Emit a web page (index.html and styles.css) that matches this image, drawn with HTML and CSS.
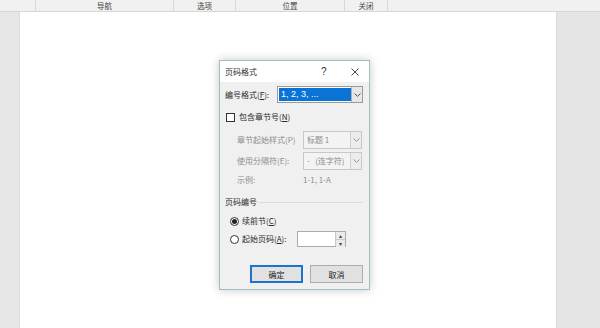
FILE: index.html
```html
<!DOCTYPE html>
<html lang="zh-CN">
<head>
  <meta charset="UTF-8" />
  <meta name="viewport" content="width=device-width, initial-scale=1.0" />
  <title>页码格式</title>
  <link rel="stylesheet" href="styles.css">
</head>
<body>
  <div class="topbar">
    <div class="tab tab-blank1"></div>
    <div class="tab tab-nav">导航</div>
    <div class="tab tab-opt">选项</div>
    <div class="tab tab-pos">位置</div>
    <div class="tab tab-close">关闭</div>
    <div class="tab tab-rest"></div>
  </div>

  <div class="workspace">
    <div class="gutter-left"></div>
    <div class="page">
      <div class="dialog">
        <div class="titlebar">
          <span class="title">页码格式</span>
          <span class="help">?</span>
          <span class="close"><svg width="8" height="8" viewBox="0 0 8 8"><path d="M0.5 0.5 L7.5 7.5 M7.5 0.5 L0.5 7.5" stroke="#333" stroke-width="0.9"/></svg></span>
        </div>

        <div class="dlg-body">
          <div class="row row-format">
            <span class="label">编号格式(<u>F</u>):</span>
            <div class="select select-main">
              <span class="sel-value">1, 2, 3, ...</span>
              <span class="sel-arrow"><svg width="7" height="4" viewBox="0 0 7 4"><path d="M0.5 0.5 L3.5 3.3 L6.5 0.5" fill="none" stroke="#555" stroke-width="1"/></svg></span>
            </div>
          </div>

          <div class="row row-check">
            <span class="checkbox"></span>
            <span class="label">包含章节号(<u>N</u>)</span>
          </div>

          <div class="row row-sub row-p">
            <span class="label sub-label disabled">章节起始样式(P)</span>
            <div class="select select-off">
              <span class="sel-value">标题 1</span>
              <span class="sel-arrow"><svg width="7" height="4" viewBox="0 0 7 4"><path d="M0.5 0.5 L3.5 3.3 L6.5 0.5" fill="none" stroke="#999" stroke-width="1"/></svg></span>
            </div>
          </div>

          <div class="row row-sub row-e">
            <span class="label sub-label disabled">使用分隔符(E):</span>
            <div class="select select-off">
              <span class="sel-value">-&nbsp;&nbsp;&nbsp;(连字符)</span>
              <span class="sel-arrow"><svg width="7" height="4" viewBox="0 0 7 4"><path d="M0.5 0.5 L3.5 3.3 L6.5 0.5" fill="none" stroke="#999" stroke-width="1"/></svg></span>
            </div>
          </div>

          <div class="row row-sub row-sample">
            <span class="label sub-label disabled">示例:</span>
            <span class="label disabled">1-1, 1-A</span>
          </div>

          <div class="group">
            <span class="label">页码编号</span>
            <span class="group-line"></span>
          </div>

          <div class="row row-radio row-r1">
            <span class="radio checked"></span>
            <span class="label">续前节(<u>C</u>)</span>
          </div>

          <div class="row row-radio row-r2">
            <span class="radio"></span>
            <span class="label radio-label">起始页码(<u>A</u>):</span>
            <div class="spin">
              <span class="spin-field"></span>
              <span class="spin-btns">
                <span class="spin-btn">▴</span>
                <span class="spin-btn">▾</span>
              </span>
            </div>
          </div>

          <div class="buttons">
            <button class="btn btn-default">确定</button>
            <button class="btn">取消</button>
          </div>
        </div>
      </div>
    </div>
    <div class="gutter-right"></div>
  </div>
</body>
</html>
```

FILE: styles.css
```css
* {
  box-sizing: border-box;
}
body {
  margin: 0;
  width: 600px;
  height: 328px;
  overflow: hidden;
  font-family: "Noto Sans CJK SC", "Liberation Sans", sans-serif;
  color: #2b2b2b;
  background: #e6e6e6;
}
.topbar {
  display: flex;
  height: 12px;
  background: #f1f1f1;
  border-bottom: 1px solid #d6d6d6;
  font-size: 7.5px;
  line-height: 11px;
  color: #444;
}
.tab {
  text-align: center;
  border-right: 1px solid #d9d9d9;
}
.tab-blank1 { width: 36px; }
.tab-nav { width: 138px; }
.tab-opt { width: 62px; }
.tab-pos { width: 109px; }
.tab-close { width: 43px; }
.tab-rest { flex: 1; border-right: none; }

.workspace {
  display: flex;
  height: 316px;
}
.gutter-left {
  width: 20px;
  background: #e6e6e6;
  border-right: 1px solid #dcdcdc;
}
.page {
  width: 536px;
  background: #fff;
}
.gutter-right {
  flex: 1;
  background: #e5e5e5;
  border-left: 1px solid #d8d8d8;
}

.dialog {
  width: 151px;
  height: 230px;
  margin: 48px 0 0 199px;
  border: 1px solid #9cbfc6;
  background: #f0f0f0;
  box-shadow: 0 0 9px rgba(0, 0, 0, 0.22);
  display: flex;
  flex-direction: column;
}
.titlebar {
  height: 21px;
  background: #fff;
  display: flex;
  align-items: center;
  padding-left: 5px;
  font-size: 8px;
}
.title {
  flex: 1;
}
.help {
  width: 30px;
  font-family: "Liberation Sans", sans-serif;
  font-size: 10px;
  color: #333;
}
.close {
  width: 18px;
  display: flex;
  align-items: center;
}

.dlg-body {
  padding: 0 6px 0 5px;
  font-size: 8px;
  line-height: 10px;
}
.row {
  display: flex;
  align-items: center;
}
.label u {
  text-decoration: underline;
}
.disabled {
  color: #8d8d8d;
}
.row-format {
  height: 17px;
  margin-top: 4px;
}
.row-format .label {
  width: 52px;
}
.select {
  display: flex;
  height: 100%;
  border: 1px solid #9a9a9a;
  background: #fff;
}
.select-main {
  width: 86px;
  padding: 1px 0 1px 1px;
}
.select-main .sel-value {
  flex: 1;
  background: #0a74d6;
  color: #fff;
  padding-left: 2px;
  line-height: 13px;
  font-family: "Liberation Sans", sans-serif;
  font-size: 9px;
}
.sel-arrow {
  width: 11px;
  display: flex;
  align-items: center;
  justify-content: center;
  background: #e6e6e6;
  border-left: 1px solid #b0b0b0;
  margin: -1px 0;
}
.select-off {
  width: 59px;
  border-color: #c8c8c8;
  background: #f3f3f3;
}
.select-off .sel-value {
  flex: 1;
  color: #8d8d8d;
  padding-left: 3px;
  line-height: 15px;
}
.select-off .sel-arrow {
  margin: 0;
  border-left-color: #d0d0d0;
  background: #ececec;
}

.row-check {
  height: 12px;
  margin-top: 8px;
}
.checkbox {
  width: 9px;
  height: 9px;
  border: 1px solid #333;
  background: #fff;
  margin: 0 4px 0 1px;
}
.row-sub {
  padding-left: 12px;
}
.sub-label {
  width: 66px;
}
.row-p {
  height: 18px;
  margin-top: 8px;
}
.row-e {
  height: 18px;
  margin-top: 3px;
}
.row-sample {
  height: 12px;
  margin-top: 4px;
}

.group {
  display: flex;
  align-items: center;
  height: 12px;
  margin-top: 10px;
}
.group-line {
  flex: 1;
  height: 1px;
  margin-left: 1px;
  background: #dcdcdc;
}

.row-radio {
  padding-left: 5px;
}
.radio {
  width: 9px;
  height: 9px;
  border: 1px solid #333;
  border-radius: 50%;
  background: #fff;
  margin-right: 3px;
  display: flex;
  align-items: center;
  justify-content: center;
}
.radio.checked::after {
  content: "";
  width: 5px;
  height: 5px;
  border-radius: 50%;
  background: #222;
}
.row-r1 {
  height: 12px;
  margin-top: 7px;
}
.row-r2 {
  height: 16px;
  margin-top: 4px;
}
.radio-label {
  width: 55px;
}
.spin {
  display: flex;
  width: 49px;
  height: 16px;
  border: 1px solid #ababab;
  background: #fff;
}
.spin-field {
  flex: 1;
}
.spin-btns {
  width: 10px;
  display: flex;
  flex-direction: column;
  border-left: 1px solid #c8c8c8;
}
.spin-btn {
  flex: 1;
  background: #eaeaea;
  font-family: "DejaVu Sans", sans-serif;
  font-size: 6px;
  line-height: 7px;
  text-align: center;
  color: #444;
}
.spin-btn + .spin-btn {
  border-top: 1px solid #c8c8c8;
}

.buttons {
  display: flex;
  justify-content: flex-end;
  gap: 7px;
  margin-top: 18px;
}
.btn {
  width: 53px;
  height: 18px;
  padding: 0;
  border: 1px solid #adadad;
  background: #e1e1e1;
  font-family: "Noto Sans CJK SC", sans-serif;
  font-size: 8px;
  color: #222;
}
.btn-default {
  border: 1px solid #1b74c9;
  box-shadow: inset 0 0 0 1px #1b74c9;
}
```
